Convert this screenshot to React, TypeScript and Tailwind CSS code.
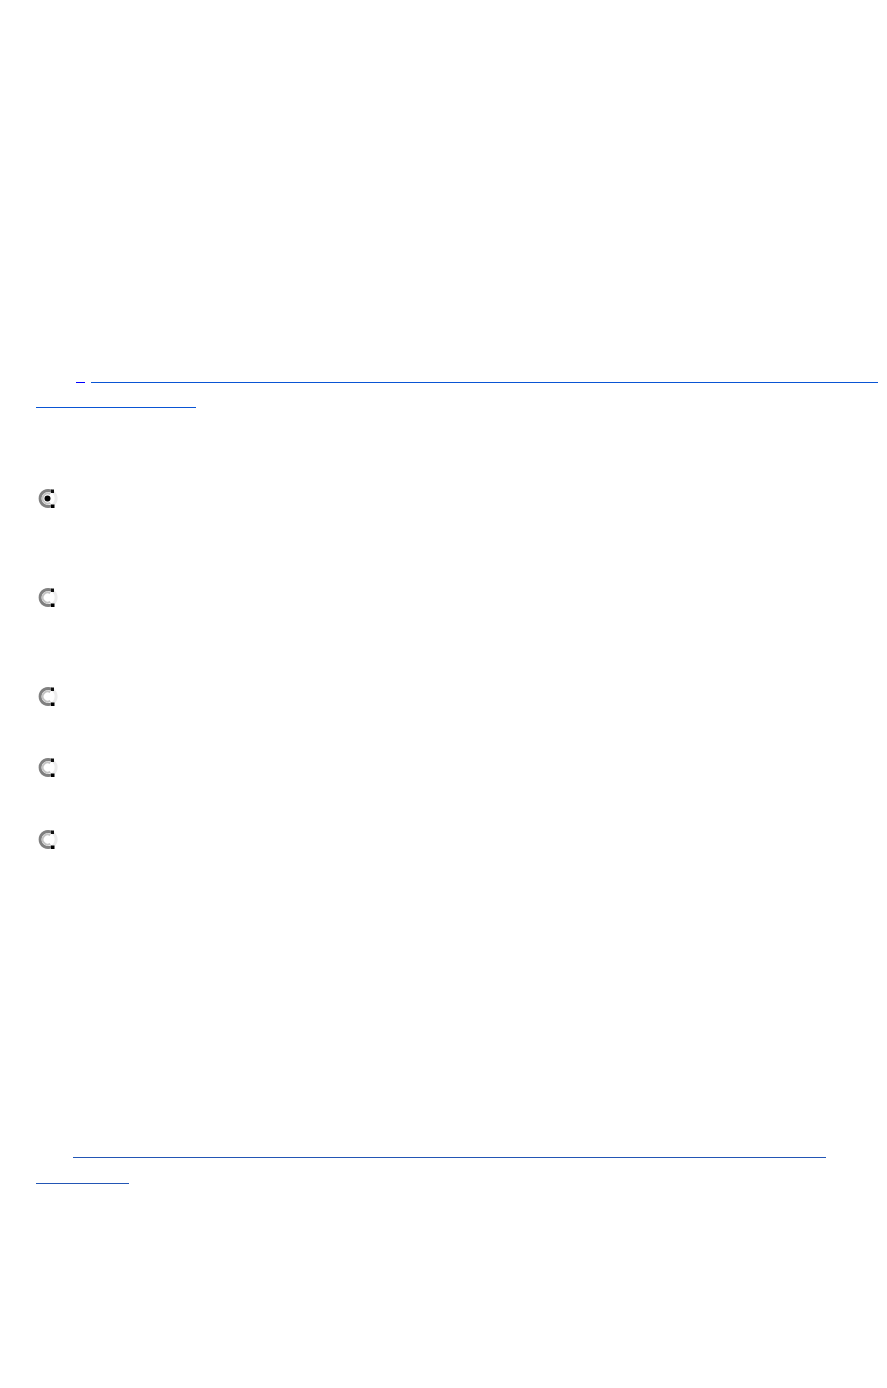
function Radio({ checked = false }: { checked?: boolean }) {
  return (
    <svg width="21" height="21" viewBox="0 0 21 21" aria-hidden>
      <path d="M15 3.5A8 8 0 1 0 15 17.5" fill="none" stroke="#808080" strokeWidth="3" />
      <path d="M15 3.5A8 8 0 0 1 15 17.5" fill="none" stroke="#ececec" strokeWidth="3" />
      <path d="M13.2 6.2A5 5 0 1 0 13.2 14.8" fill="none" stroke="#c4c4c4" strokeWidth="2" />
      <rect x="14" y="1.5" width="3" height="3.5" fill="#111" />
      <rect x="14" y="16.5" width="3.5" height="3.5" fill="#000" />
      {checked ? <circle cx="10.5" cy="10.5" r="3" fill="#000" /> : null}
    </svg>
  )
}

export default function App() {
  const options = [
    { checked: true, gap: "mt-[80px]" },
    { checked: false, gap: "mt-[78px]" },
    { checked: false, gap: "mt-[78px]" },
    { checked: false, gap: "mt-[50px]" },
    { checked: false, gap: "mt-[51px]" },
  ]
  return (
    <div className="min-h-[1388px] w-[887px] bg-white font-['Liberation_Sans',sans-serif]">
      <div className="pt-[382px]">
        <a href="#" className="flex h-px">
          <span className="ml-[76px] w-[9px] bg-[#0000ff]" />
          <span className="ml-[6px] w-[787px] bg-[#0a55d4]" />
        </a>
        <a href="#" className="mt-[24px] ml-[36px] block h-px w-[160px] bg-[#0a55d4]" />
      </div>
      <form className="flex flex-col">
        {options.map((o, i) => (
          <label key={i} className={`${o.gap} ml-[37px] block h-[21px] w-[21px]`}>
            <input type="radio" name="opt" defaultChecked={o.checked} className="sr-only" />
            <Radio checked={o.checked} />
          </label>
        ))}
      </form>
      <div className="mt-[307px]">
        <a href="#" className="ml-[73px] block h-px w-[753px] bg-[#2356b5]" />
        <a href="#" className="mt-[25px] ml-[36px] block h-px w-[93px] bg-[#2356b5]" />
      </div>
    </div>
  )
}
